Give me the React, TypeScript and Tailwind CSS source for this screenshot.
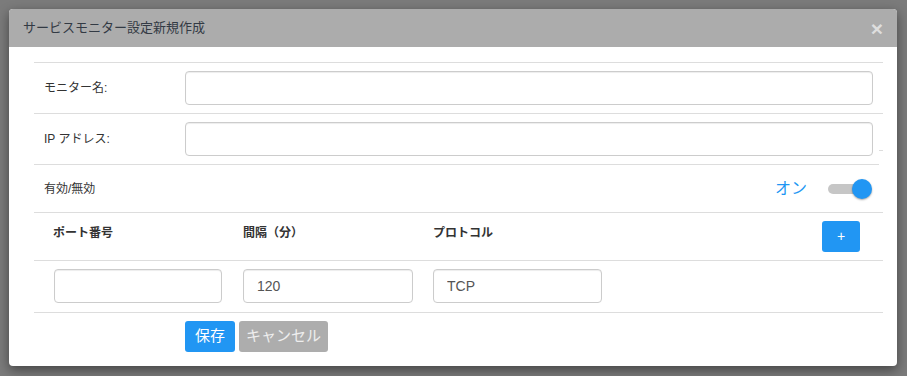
import { useState } from 'react';

const font = { fontFamily: '"Liberation Sans", "Noto Sans CJK JP", sans-serif' };

function TextInput({ value, className }: { value?: string; className?: string }) {
  return (
    <input
      defaultValue={value}
      className={`h-[34px] rounded-[4px] border border-[#cccccc] bg-white px-[13px] text-[14px] text-[#555555] shadow-[inset_0_1px_1px_rgba(0,0,0,0.075)] outline-none ${className ?? ''}`}
    />
  );
}

function Toggle({ on, onChange }: { on: boolean; onChange: (v: boolean) => void }) {
  return (
    <button onClick={() => onChange(!on)} className="relative h-[20px] w-[44px]">
      <span className="absolute left-0 top-[5px] h-[10px] w-[36px] rounded-full bg-[#c6c6c6]" />
      <span
        className={`absolute top-0 h-[20px] w-[20px] rounded-full shadow-[0_1px_2px_rgba(0,0,0,0.35)] ${on ? 'left-[24px] bg-[#2196f3]' : 'left-0 bg-[#f1f1f1]'}`}
      />
    </button>
  );
}

export default function App() {
  const [enabled, setEnabled] = useState(true);

  return (
    <div className="h-[376px] w-[907px] overflow-hidden bg-[#7b7b7b] pt-[9px] pl-[9px]" style={font}>
      <div className="h-[357px] w-[888px] rounded-[4px] bg-white shadow-[0_4px_12px_rgba(0,0,0,0.45)]">
        {/* header */}
        <div className="flex h-[38px] items-center justify-between rounded-t-[4px] bg-[#acacac] pl-[14px] pr-[14px]">
          <h4 className="text-[13px] text-[#333a44]">サービスモニター設定新規作成</h4>
          <button className="text-[21px] font-bold leading-none text-[#dedede]">×</button>
        </div>

        {/* body */}
        <div className="pl-[25px] pr-[14px] pt-[15px]">
          <div className="border-t border-[#dddddd]">
            <div className="flex items-center border-b border-[#dddddd] py-[8px] pl-[10px] pr-[10px]">
              <label className="w-[141px] text-[12px] text-[#333333]">モニター名:</label>
              <TextInput className="flex-1" />
            </div>
            <div className="relative mr-[4px] flex items-center border-b border-[#dddddd] py-[8px] pl-[10px] pr-[6px]">
              <label className="w-[141px] text-[12px] text-[#333333]">IP アドレス:</label>
              <TextInput className="flex-1" />
              <span className="absolute right-[-4px] top-[36px] h-px w-[4px] bg-[#dddddd]" />
            </div>
            <div className="flex h-[48px] items-center justify-between border-b border-[#dddddd] pl-[10px] pr-[11px]">
              <span className="text-[12px] text-[#333333]">有効/無効</span>
              <div className="flex items-center gap-[21px]">
                <span className="text-[16px] text-[#2196f3]">{enabled ? 'オン' : 'オフ'}</span>
                <Toggle on={enabled} onChange={setEnabled} />
              </div>
            </div>
            <div className="flex h-[48px] items-start border-b border-[#dddddd] pl-[19px] pr-[23px]">
              <div className="grid flex-1 grid-cols-[190px_190px_190px] pt-[11px] text-[12px] font-bold text-[#333333]">
                <span>ポート番号</span>
                <span>間隔（分）</span>
                <span>プロトコル</span>
              </div>
              <button className="mt-[8px] flex h-[31px] w-[38px] items-center justify-center rounded-[3px] bg-[#2196f3] text-[14px] text-white">
                +
              </button>
            </div>
            <div className="grid grid-cols-[189px_190px_190px] border-b border-[#dddddd] pt-[8px] pb-[9px] pl-[20px]">
              <TextInput className="w-[168px]" />
              <TextInput value="120" className="w-[170px]" />
              <TextInput value="TCP" className="w-[169px]" />
            </div>
            <div className="flex gap-[4px] pt-[8px] pl-[151px]">
              <button className="h-[31px] w-[50px] rounded-[3px] bg-[#2196f3] text-[15px] text-white">保存</button>
              <button className="h-[31px] w-[89px] rounded-[3px] bg-[#adadad] text-[15px] text-[#eeeeee]">キャンセル</button>
            </div>
          </div>
        </div>
      </div>
    </div>
  );
}
